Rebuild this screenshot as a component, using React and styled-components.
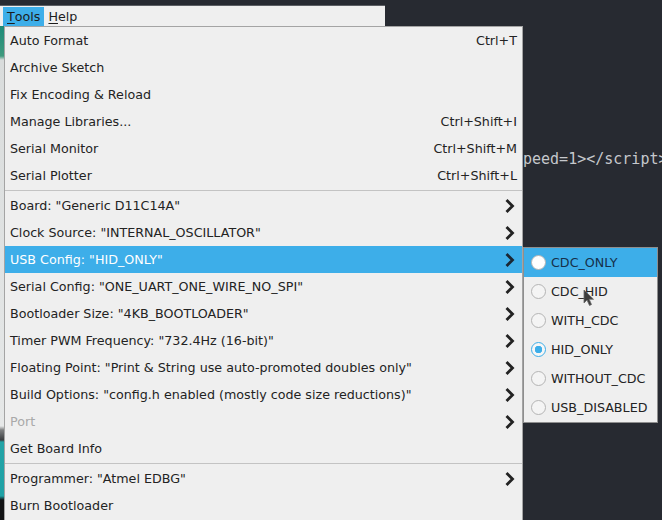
import React from "react";
import styled, { createGlobalStyle } from "styled-components";

const GlobalStyle = createGlobalStyle`
  html, body {
    margin: 0;
    padding: 0;
    background: #272a31;
  }
  * {
    box-sizing: border-box;
  }
`;

const mainItems = [
  { label: "Auto Format", shortcut: "Ctrl+T" },
  { label: "Archive Sketch" },
  { label: "Fix Encoding & Reload" },
  { label: "Manage Libraries...", shortcut: "Ctrl+Shift+I" },
  { label: "Serial Monitor", shortcut: "Ctrl+Shift+M" },
  { label: "Serial Plotter", shortcut: "Ctrl+Shift+L" },
  { sep: true },
  { label: 'Board: "Generic D11C14A"', arrow: true },
  { label: 'Clock Source: "INTERNAL_OSCILLATOR"', arrow: true },
  { label: 'USB Config: "HID_ONLY"', arrow: true, active: true },
  { label: 'Serial Config: "ONE_UART_ONE_WIRE_NO_SPI"', arrow: true },
  { label: 'Bootloader Size: "4KB_BOOTLOADER"', arrow: true },
  { label: 'Timer PWM Frequency: "732.4Hz (16-bit)"', arrow: true },
  { label: 'Floating Point: "Print & String use auto-promoted doubles only"', arrow: true },
  { label: 'Build Options: "config.h enabled (mostly code size reductions)"', arrow: true },
  { label: "Port", arrow: true, disabled: true },
  { label: "Get Board Info" },
  { sep: true },
  { label: 'Programmer: "Atmel EDBG"', arrow: true },
  { label: "Burn Bootloader" },
  { sep: true },
];

const usbOptions = [
  { label: "CDC_ONLY", hover: true },
  { label: "CDC_HID" },
  { label: "WITH_CDC" },
  { label: "HID_ONLY", checked: true },
  { label: "WITHOUT_CDC" },
  { label: "USB_DISABLED" },
];

const Chevron = ({ color }) => (
  <svg width="10" height="14" viewBox="0 0 10 14">
    <polyline
      points="2.5,2 7.5,7 2.5,12"
      fill="none"
      stroke={color}
      strokeWidth="2.8"
      strokeLinecap="square"
    />
  </svg>
);

const Pointer = () => (
  <svg width="12" height="18" viewBox="0 0 12 18">
    <polygon
      points="1,1 1,14 4,11 6.5,16.5 8.5,15.5 6.2,10.3 10.5,10.3"
      fill="#3d3d3d"
      stroke="#6a6a6a"
      strokeWidth="0.8"
    />
  </svg>
);

const App = () => {
  return (
    <>
      <GlobalStyle />
      <Screen>
        <EdgeStrip />
        <Editor>
          <TopBar>
            <MenuBar>
              <BarItem $open>
                <u>T</u>ools
              </BarItem>
              <BarItem>
                <u>H</u>elp
              </BarItem>
            </MenuBar>
          </TopBar>
          <CodeLine>peed=1&gt;&lt;/script&gt;</CodeLine>
        </Editor>

        <Menu>
          {mainItems.map((item, i) =>
            item.sep ? (
              <Separator key={i} />
            ) : (
              <Item key={i} $active={item.active} $disabled={item.disabled}>
                <span>{item.label}</span>
                {item.shortcut && <Shortcut>{item.shortcut}</Shortcut>}
                {item.arrow && (
                  <Arrow>
                    <Chevron color={item.active ? "#1b2733" : "#222"} />
                  </Arrow>
                )}
              </Item>
            )
          )}
        </Menu>

        <SubMenu>
          {usbOptions.map((opt) => (
            <Option key={opt.label} $hover={opt.hover}>
              <Radio $checked={opt.checked} $hover={opt.hover} />
              <span>{opt.label}</span>
            </Option>
          ))}
        </SubMenu>

        <Cursor>
          <Pointer />
        </Cursor>
      </Screen>
    </>
  );
};

const Screen = styled.div`
  position: relative;
  width: 662px;
  height: 520px;
  overflow: hidden;
  display: flex;
  background: #272a31;
  font-family: "DejaVu Sans", "Liberation Sans", sans-serif;
  font-size: 12.7px;
  color: #232323;
`;

const EdgeStrip = styled.div`
  width: 4px;
  flex: none;
  margin-top: 26px;
  background: linear-gradient(
    to bottom,
    #1d8a78 0px,
    #3f9a7e 30px,
    #d9dcdc 34px,
    #e6e8e8 400px,
    #7d7f80 404px,
    #3a3d40 414px,
    #23a3a6 416px,
    #1fa2a6 470px,
    #121314 474px
  );
`;

const Editor = styled.div`
  flex: 1;
  display: flex;
  flex-direction: column;
`;

const TopBar = styled.div`
  height: 26px;
  display: flex;
  margin-left: -4px;
`;

const MenuBar = styled.div`
  width: 385px;
  margin-top: 5px;
  background: #efefef;
  border-top: 1px solid #5b5e63;
  display: flex;
  align-items: center;
  padding-left: 3px;
  height: 21px;
`;

const BarItem = styled.div`
  height: 19px;
  display: flex;
  align-items: center;
  padding: 0 4px;
  background: ${(p) => (p.$open ? "#3daee9" : "transparent")};
  color: #1c1c1c;

  u {
    text-decoration-thickness: 1px;
    text-underline-offset: 2px;
  }
`;

const CodeLine = styled.div`
  margin-top: 124px;
  padding-left: 519px;
  font-family: "DejaVu Sans Mono", "Liberation Mono", monospace;
  font-size: 15px;
  color: #c5c8cc;
  white-space: nowrap;
`;

const Menu = styled.div`
  position: absolute;
  left: 4px;
  top: 26px;
  width: 519px;
  background: #efefef;
  border: 1px solid #a4a4a4;
  border-bottom: none;
  display: flex;
  flex-direction: column;
`;

const Item = styled.div`
  height: 27px;
  display: flex;
  align-items: center;
  padding: 0 5px 0 5px;
  white-space: nowrap;
  background: ${(p) => (p.$active ? "#3daee9" : "transparent")};
  color: ${(p) => (p.$active ? "#ffffff" : p.$disabled ? "#a9a9a9" : "#232323")};

  span:first-child {
    flex: 1;
  }
`;

const Shortcut = styled.span`
  color: #232323;
`;

const Arrow = styled.span`
  display: flex;
  align-items: center;
  margin-right: 2px;
`;

const Separator = styled.div`
  height: 3px;
  display: flex;
  align-items: center;

  &::before {
    content: "";
    flex: 1;
    height: 1px;
    background: #c3c3c3;
  }
`;

const SubMenu = styled.div`
  position: absolute;
  left: 523px;
  top: 247px;
  width: 135px;
  background: #efefef;
  border: 1px solid #8e8e8e;
  display: flex;
  flex-direction: column;
`;

const Option = styled.div`
  height: 29px;
  display: flex;
  align-items: center;
  gap: 5px;
  padding-left: 7px;
  white-space: nowrap;
  background: ${(p) => (p.$hover ? "#3daee9" : "transparent")};
  color: ${(p) => (p.$hover ? "#16304a" : "#232323")};
`;

const Radio = styled.span`
  width: 15px;
  height: 15px;
  flex: none;
  border-radius: 50%;
  border: 1px solid ${(p) => (p.$checked ? "#3daee9" : "#b4b4b4")};
  background: ${(p) =>
    p.$checked
      ? "radial-gradient(circle, #3daee9 0 3.5px, #f6f6f6 4px)"
      : p.$hover
      ? "#ffffff"
      : "#f4f4f4"};
`;

const Cursor = styled.div`
  position: absolute;
  left: 583px;
  top: 289px;
  line-height: 0;
`;

export default App;
